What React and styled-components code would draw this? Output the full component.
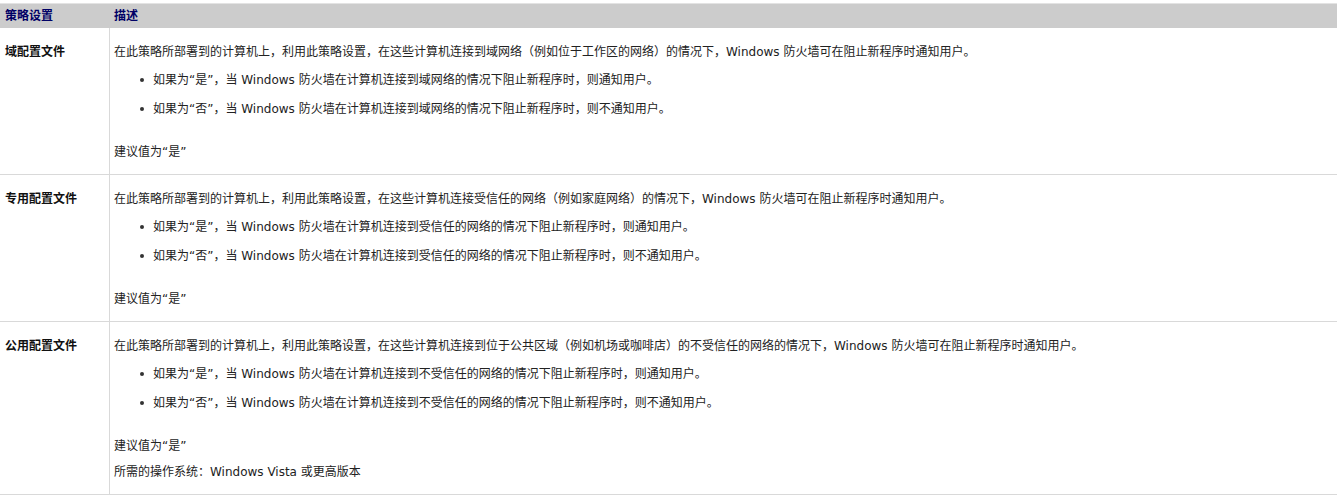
import React from "react";
import styled, { createGlobalStyle } from "styled-components";

const Global = createGlobalStyle`
  html, body { margin: 0; padding: 0; background: #fff; }
  body {
    font-family: "DejaVu Sans", "Noto Sans CJK SC", sans-serif;
    font-size: 12px;
    color: #222;
  }
`;

const Table = styled.div`
  margin-top: 3px;
  border-top: 1px solid #e3e3e3;
  display: grid;
  grid-template-columns: 110px 1fr;
  width: 100%;
`;

const HeadCell = styled.div`
  background: #cccccc;
  height: 24px;
  line-height: 24px;
  padding-left: ${(p) => (p.$first ? "5px" : "4px")};
  font-weight: bold;
  color: #000066;
  white-space: nowrap;
`;

const LabelCell = styled.div`
  border-right: 1px solid #d9d9d9;
  border-bottom: 1px solid #d9d9d9;
  padding: 16px 0 14px 5px;
  line-height: 16px;
  font-weight: bold;
  color: #111;
`;

const DescCell = styled.div`
  border-bottom: 1px solid #d9d9d9;
  padding: 16px 4px 14px 4px;
  display: flex;
  flex-direction: column;
  line-height: 16px;
  white-space: nowrap;
`;

const Para = styled.p`
  margin: ${(p) => p.$top || 0}px 0 0 0;
  line-height: 16px;
`;

const List = styled.ul`
  list-style: none;
  margin: 12px 0 0 0;
  padding: 0;
  display: flex;
  flex-direction: column;
  gap: 13px;
`;

const Item = styled.li`
  position: relative;
  padding-left: 39px;
  line-height: 16px;
  &::before {
    content: "";
    position: absolute;
    left: 26px;
    top: 6px;
    width: 4px;
    height: 4px;
    border-radius: 50%;
    background: #333;
  }
`;

const rows = [
  {
    label: "域配置文件",
    intro:
      "在此策略所部署到的计算机上，利用此策略设置，在这些计算机连接到域网络（例如位于工作区的网络）的情况下，Windows 防火墙可在阻止新程序时通知用户。",
    net: "域网络",
  },
  {
    label: "专用配置文件",
    intro:
      "在此策略所部署到的计算机上，利用此策略设置，在这些计算机连接受信任的网络（例如家庭网络）的情况下，Windows 防火墙可在阻止新程序时通知用户。",
    net: "受信任的网络",
  },
  {
    label: "公用配置文件",
    intro:
      "在此策略所部署到的计算机上，利用此策略设置，在这些计算机连接到位于公共区域（例如机场或咖啡店）的不受信任的网络的情况下，Windows 防火墙可在阻止新程序时通知用户。",
    net: "不受信任的网络",
    os: "所需的操作系统：Windows Vista 或更高版本",
  },
];

export default function App() {
  return (
    <>
      <Global />
      <Table>
        <HeadCell $first>策略设置</HeadCell>
        <HeadCell>描述</HeadCell>
        {rows.map((r) => (
          <React.Fragment key={r.label}>
            <LabelCell>{r.label}</LabelCell>
            <DescCell>
              <Para>{r.intro}</Para>
              <List>
                <Item>
                  如果为“是”，当 Windows 防火墙在计算机连接到{r.net}的情况下阻止新程序时，则通知用户。
                </Item>
                <Item>
                  如果为“否”，当 Windows 防火墙在计算机连接到{r.net}的情况下阻止新程序时，则不通知用户。
                </Item>
              </List>
              <Para $top={27}>建议值为“是”</Para>
              {r.os && <Para $top={10}>{r.os}</Para>}
            </DescCell>
          </React.Fragment>
        ))}
      </Table>
    </>
  );
}
